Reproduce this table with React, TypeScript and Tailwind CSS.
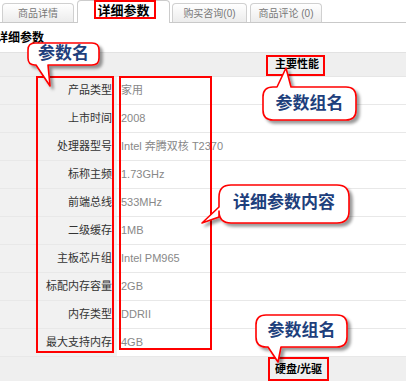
import type { ReactNode } from "react";

type Tail = {
  side: "top" | "bottom" | "left";
  from: number;
  to: number;
  tip: [number, number];
};

const specs: [string, string][] = [
  ["产品类型", "家用"],
  ["上市时间", "2008"],
  ["处理器型号", "Intel 奔腾双核 T2370"],
  ["标称主频", "1.73GHz"],
  ["前端总线", "533MHz"],
  ["二级缓存", "1MB"],
  ["主板芯片组", "Intel PM965"],
  ["标配内存容量", "2GB"],
  ["内存类型", "DDRII"],
  ["最大支持内存", "4GB"],
];

// rounded box with a pointer, all in page coordinates
function bubblePath(x: number, y: number, w: number, h: number, r: number, t: Tail) {
  const R = x + w;
  const B = y + h;
  const tip = `L${t.tip[0]},${t.tip[1]}`;
  let d = `M${x + r},${y}`;
  if (t.side === "top") d += ` H${t.from} ${tip} L${t.to},${y}`;
  d += ` H${R - r} Q${R},${y} ${R},${y + r} V${B - r} Q${R},${B} ${R - r},${B}`;
  if (t.side === "bottom") d += ` H${t.to} ${tip} L${t.from},${B}`;
  d += ` H${x + r} Q${x},${B} ${x},${B - r}`;
  if (t.side === "left") d += ` V${t.to} ${tip} L${x},${t.from}`;
  d += ` V${y + r} Q${x},${y} ${x + r},${y} Z`;
  return d;
}

const bubbles = [
  bubblePath(28, 43, 71, 22, 7, { side: "bottom", from: 36, to: 48, tip: [50, 86] }),
  bubblePath(263, 87, 93, 33, 10, { side: "top", from: 277, to: 291, tip: [286, 68] }),
  bubblePath(219, 185, 130, 38, 12, { side: "left", from: 207, to: 217, tip: [202, 223] }),
  bubblePath(256, 315, 91, 32, 10, { side: "bottom", from: 268, to: 281, tip: [278, 362] }),
];

function Tab({ children, className }: { children: ReactNode; className: string }) {
  return (
    <div
      className={`flex h-[19px] shrink-0 items-center justify-center whitespace-nowrap rounded-t-[4px] border border-b-0 border-[#d0d0d0] bg-gradient-to-b from-white to-[#ececec] text-[10px] text-[#777] ${className}`}
    >
      {children}
    </div>
  );
}

export default function App() {
  return (
    <div className="relative h-[381px] w-[406px] overflow-hidden bg-white font-['Liberation_Sans','Noto_Sans_CJK_SC',sans-serif]">
      <div className="flex h-[23px] items-end border-b border-[#c9c9c9] pl-[2px]">
        <Tab className="w-[72px]">商品详情</Tab>
        <div className="relative -mb-px ml-[3px] flex h-[23px] w-[93px] shrink-0 items-center justify-center rounded-t-[4px] border border-b-0 border-[#cccccc] bg-white pb-[3px] text-[13px] font-bold text-black">
          详细参数
        </div>
        <Tab className="ml-[2px] w-[75px]">购买咨询(0)</Tab>
        <Tab className="ml-[3px] w-[72px]">商品评论 (0)</Tab>
      </div>

      <div className="-ml-[4px] flex h-[29px] items-center text-[12px] font-bold text-black">详细参数</div>

      <div className="border-t border-[#e2e2e2]">
        <div className="flex h-[24px] items-center border-b border-[#e6e6e6] bg-[#efefef] pl-[275px] text-[11px] font-bold text-black">
          主要性能
        </div>
        {specs.map(([name, value]) => (
          <div key={name} className="flex h-[28px] border-b border-[#e8e8e8]">
            <div className="flex w-[117px] items-center justify-end bg-[#f1f1f1] pr-[5px] text-[11px] text-[#333]">
              {name}
            </div>
            <div className="flex flex-1 items-center pl-[4px] text-[11px] text-[#888]">{value}</div>
          </div>
        ))}
        <div className="flex h-[24px] items-center bg-[#efefef] pl-[275px] text-[11px] font-bold text-black">
          硬盘/光驱
        </div>
      </div>

      {/* red highlight frames */}
      <div className="absolute left-[94px] top-0 h-[19px] w-[62px] border-2 border-[#ff0000]" />
      <div className="absolute left-[36px] top-[76px] h-[277px] w-[78px] border-2 border-[#ff0000]" />
      <div className="absolute left-[119px] top-[76px] h-[274px] w-[93px] border-2 border-[#ff0000]" />
      <div className="absolute left-[266px] top-[55px] h-[21px] w-[59px] border-2 border-[#ff0000]" />
      <div className="absolute left-[268px] top-[357px] h-[24px] w-[61px] border-2 border-[#ff0000]" />

      {/* callouts */}
      <svg className="pointer-events-none absolute left-0 top-0" width={406} height={381} viewBox="0 0 406 381">
        <defs>
          <filter id="bubble-shadow" x="-20%" y="-20%" width="150%" height="160%">
            <feDropShadow dx="3" dy="3" stdDeviation="1.6" floodColor="#000" floodOpacity="0.4" />
          </filter>
        </defs>
        {bubbles.map((d, i) => (
          <path key={i} d={d} fill="#fff" stroke="#ff0000" strokeWidth={1.6} strokeLinejoin="round" filter="url(#bubble-shadow)" />
        ))}
      </svg>
      <div className="absolute left-[28px] top-[43px] flex h-[22px] w-[71px] items-center justify-center text-[17px] font-bold text-[#1e3f7c]">
        参数名
      </div>
      <div className="absolute left-[263px] top-[87px] flex h-[33px] w-[93px] items-center justify-center text-[17px] font-bold text-[#1e3f7c]">
        参数组名
      </div>
      <div className="absolute left-[219px] top-[185px] flex h-[36px] w-[130px] items-center justify-center text-[17px] font-bold text-[#1e3f7c]">
        详细参数内容
      </div>
      <div className="absolute left-[256px] top-[315px] flex h-[32px] w-[91px] items-center justify-center text-[17px] font-bold text-[#1e3f7c]">
        参数组名
      </div>
    </div>
  );
}
